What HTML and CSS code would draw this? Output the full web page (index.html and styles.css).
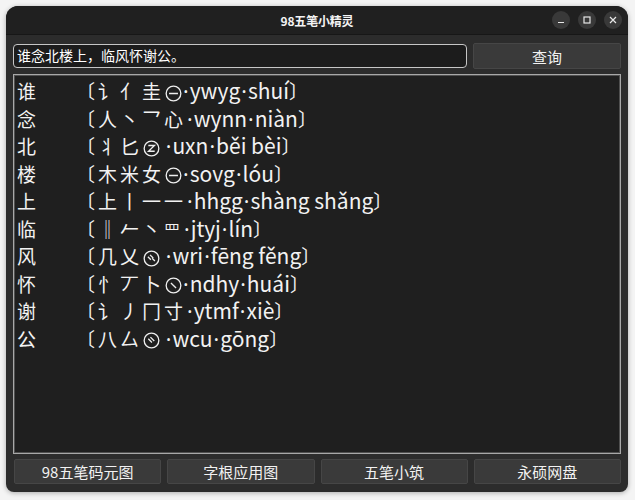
FILE: index.html
```html
<!DOCTYPE html>
<html lang="zh-CN">
<head>
<meta charset="utf-8">
<title>98五笔小精灵</title>
<link rel="stylesheet" href="styles.css">
</head>
<body>
<div class="window">
  <header class="titlebar">
    <div class="title">98五笔小精灵</div>
    <div class="controls">
      <span class="ctl"><svg width="10" height="10" viewBox="0 0 10 10"><path d="M2 7.5H8" stroke="#e8e8e8" stroke-width="1.2"/></svg></span>
      <span class="ctl"><svg width="10" height="10" viewBox="0 0 10 10"><rect x="2" y="2" width="6" height="6" fill="none" stroke="#e8e8e8" stroke-width="1.2"/></svg></span>
      <span class="ctl"><svg width="10" height="10" viewBox="0 0 10 10"><path d="M2 2L8 8M8 2L2 8" stroke="#e8e8e8" stroke-width="1.2"/></svg></span>
    </div>
  </header>
  <main class="body">
    <div class="search">
      <div class="input">谁念北楼上，临风怀谢公。</div>
      <div class="btn query">查询</div>
    </div>
    <div class="result">
      <div class="row"><span class="ch">谁</span><span class="code">〔讠亻圭<svg class="idc" viewBox="0 0 16 16"><circle cx="8" cy="8" r="6.9"/><path d="M3.8 8H12.2"/></svg><span class="py"><span class="dot">·</span>ywyg<span class="dot">·</span>shuí</span>〕</span></div>
      <div class="row"><span class="ch">念</span><span class="code">〔人丶乛心<span class="py"><span class="dot">·</span>wynn<span class="dot">·</span>niàn</span>〕</span></div>
      <div class="row"><span class="ch">北</span><span class="code">〔丬匕<svg class="idc" viewBox="0 0 16 16"><circle cx="8" cy="8" r="6.9"/><path d="M5 5.2H10.8L5.2 10.6H11"/></svg><span class="py"> <span class="dot">·</span>uxn<span class="dot">·</span>běi bèi</span>〕</span></div>
      <div class="row"><span class="ch">楼</span><span class="code">〔木米女<svg class="idc" viewBox="0 0 16 16"><circle cx="8" cy="8" r="6.9"/><path d="M3.8 8H12.2"/></svg><span class="py"><span class="dot">·</span>sovg<span class="dot">·</span>lóu</span>〕</span></div>
      <div class="row"><span class="ch">上</span><span class="code">〔上丨一一<span class="py"><span class="dot">·</span>hhgg<span class="dot">·</span>shàng shǎng</span>〕</span></div>
      <div class="row"><span class="ch">临</span><span class="code">〔‖𠂉丶<span class="small">罒</span><span class="py"><span class="dot">·</span>jtyj<span class="dot">·</span>lín</span>〕</span></div>
      <div class="row"><span class="ch">风</span><span class="code">〔几乂<svg class="idc" viewBox="0 0 16 16"><circle cx="8" cy="8" r="6.9"/><path d="M4.6 6.4L7.4 9.2M6.6 4.6L9.6 7.6M8.6 7.8L11.2 10.4"/></svg><span class="py"> <span class="dot">·</span>wri<span class="dot">·</span>fēng fěng</span>〕</span></div>
      <div class="row"><span class="ch">怀</span><span class="code">〔忄丆卜<svg class="idc" viewBox="0 0 16 16"><circle cx="8" cy="8" r="6.9"/><path d="M5.6 5.6L10.4 10.4"/></svg><span class="py"><span class="dot">·</span>ndhy<span class="dot">·</span>huái</span>〕</span></div>
      <div class="row"><span class="ch">谢</span><span class="code">〔讠丿冂寸<span class="py"><span class="dot">·</span>ytmf<span class="dot">·</span>xiè</span>〕</span></div>
      <div class="row"><span class="ch">公</span><span class="code">〔八厶<svg class="idc" viewBox="0 0 16 16"><circle cx="8" cy="8" r="6.9"/><path d="M5 6.4L8.4 9.8M7 4.8L10.6 8.4"/></svg><span class="py"> <span class="dot">·</span>wcu<span class="dot">·</span>gōng</span>〕</span></div>
    </div>
    <div class="links">
      <div class="btn">98五笔码元图</div>
      <div class="btn">字根应用图</div>
      <div class="btn">五笔小筑</div>
      <div class="btn">永硕网盘</div>
    </div>
  </main>
</div>
</body>
</html>
```
FILE: styles.css
```css
html, body {
  margin: 0;
  padding: 0;
  background: #f4f4f4;
}
body {
  width: 635px;
  height: 500px;
  padding: 6px 7px 8px 6px;
  box-sizing: border-box;
  font-family: "Noto Sans CJK SC", "Noto Sans", sans-serif;
  color: #f2f2f2;
}
.window {
  width: 622px;
  height: 486px;
  background: #2c2c2c;
  border-radius: 12px 12px 8px 8px;
  box-shadow: 0 1px 5px rgba(0, 0, 0, 0.3);
  display: flex;
  flex-direction: column;
  overflow: hidden;
}
.titlebar {
  height: 28px;
  flex: none;
  background: #202020;
  border-bottom: 1px solid #171717;
  display: flex;
  align-items: center;
  justify-content: center;
  position: relative;
}
.title {
  font-size: 12px;
  font-weight: bold;
  color: #f4f4f4;
  letter-spacing: -0.2px;
}
.controls {
  position: absolute;
  right: 6px;
  top: 5px;
  display: flex;
  gap: 8px;
}
.ctl {
  width: 18px;
  height: 18px;
  border-radius: 50%;
  background: #393939;
  display: flex;
  align-items: center;
  justify-content: center;
}
.body {
  flex: 1;
  display: flex;
  flex-direction: column;
  padding: 8px 7px 8px 7px;
  gap: 5px;
}
.search {
  display: flex;
  gap: 6px;
  align-items: center;
  height: 26px;
}
.input {
  flex: 1;
  height: 24px;
  box-sizing: border-box;
  border: 1px solid #c6c6c6;
  border-radius: 4px;
  background: #1c1c1c;
  font-size: 14px;
  line-height: 21px;
  padding-left: 3px;
  color: #ffffff;
  white-space: nowrap;
}
.btn {
  box-sizing: border-box;
  background: #3a3a3a;
  border: 1px solid #464646;
  border-radius: 2px;
  display: flex;
  align-items: center;
  justify-content: center;
  font-size: 15px;
  color: #f2f2f2;
}
.query {
  width: 148px;
  height: 26px;
}
.result {
  flex: 1;
  box-sizing: border-box;
  border: 1px solid #a8a8a8;
  box-shadow: inset 0 0 0 1px #505050;
  background: #1f1f1f;
  padding: 2px 3px;
  font-size: 19px;
  line-height: 27.5px;
}
.row {
  display: flex;
  white-space: nowrap;
  height: 27.5px;
}
.ch {
  width: 59px;
  flex: none;
}
.code {
  letter-spacing: 3px;
}
.py {
  font-size: 21px;
  line-height: 20px;
  letter-spacing: 0;
}
.dot {
  font-family: "Noto Sans", sans-serif;
  padding: 0 1px;
}
.small {
  font-size: 16px;
  line-height: 16px;
}
.idc {
  width: 17px;
  height: 17px;
  vertical-align: -2.5px;
  fill: none;
  stroke: #eeeeee;
  stroke-width: 1.25;
  margin-left: 1px;
}
.links {
  display: grid;
  grid-template-columns: repeat(4, 1fr);
  gap: 6px;
  height: 25px;
  padding-left: 1px;
}
.links .btn {
  font-size: 15px;
}
```
